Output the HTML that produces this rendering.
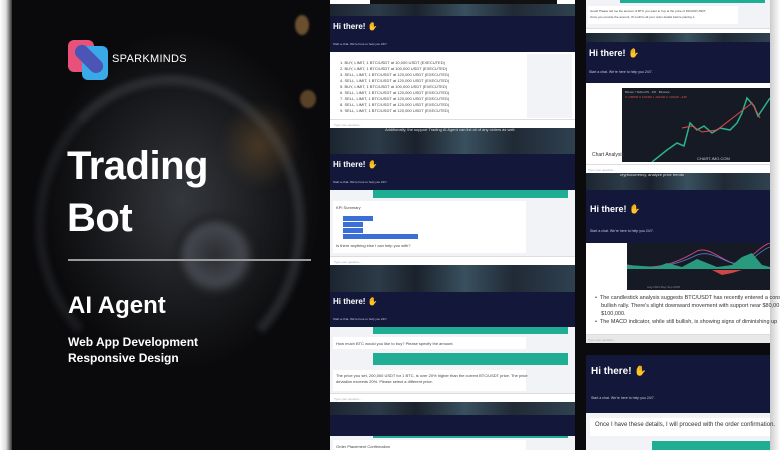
<!DOCTYPE html>
<html><head><meta charset="utf-8"><style>
*{margin:0;padding:0;box-sizing:border-box}
body{width:780px;height:450px;overflow:hidden;background:#0b0b0d;font-family:"Liberation Sans",sans-serif;position:relative}
.abs{position:absolute}
.navy{background:#13173a}
.strip{background:linear-gradient(90deg,#1b2530,#2c3b48 20%,#1a222c 35%,#39505e 55%,#202a35 75%,#2f4150);}
.hi{color:#fff;font-weight:bold;position:absolute}
.sub{color:#ccd;position:absolute}
.white{background:#fff}
.in{background:#fff;border-top:1px solid #ddd;color:#aaa;font-size:3px;position:absolute}
.t{position:absolute;font-size:4px;color:#444;line-height:6px}
</style></head><body>
<!-- left bg -->
<div class="abs" style="left:0;top:0;width:12px;height:450px;background:linear-gradient(90deg,#fff,#ddd 50%,#333)"></div>
<div class="abs" style="left:12px;top:0;width:318px;height:450px;background:radial-gradient(ellipse 140px 170px at 170px 200px,#34373c,#1a1b1e 60%,#0a0a0c 100%)"></div>
<div class="abs" style="left:35px;top:75px;width:270px;height:300px;border-radius:50%;border:10px solid rgba(110,115,125,.25);border-bottom-color:transparent;border-left-color:rgba(90,95,105,.2);filter:blur(3px)"></div>
<div class="abs" style="left:175px;top:215px;width:80px;height:80px;border-radius:50%;background:radial-gradient(#2a2c30,#44474e 50%,#1b1c1f 70%);filter:blur(3px)"></div>
<div class="abs" style="left:220px;top:100px;width:80px;height:90px;border-radius:50%;background:radial-gradient(rgba(130,95,50,.45),transparent 70%);filter:blur(4px)"></div>
<div class="abs" style="left:295px;top:15px;width:14px;height:20px;border-radius:50%;background:#6b5030;filter:blur(1px)"></div>
<div class="abs" style="left:300px;top:90px;width:16px;height:18px;border-radius:50%;background:#5a4228;filter:blur(1px)"></div>
<!-- logo -->
<svg class="abs" style="left:68px;top:38px" width="42" height="44" viewBox="0 0 42 44">
<rect x="0" y="2" width="26" height="32" rx="6" fill="#e8527a"/>
<rect x="14" y="8" width="26" height="34" rx="6" fill="#3aa9e8"/>
<rect x="4" y="14" width="34" height="14" rx="7" fill="#4a55b5" transform="rotate(45 21 21)"/>
</svg>
<div class="abs" style="left:112px;top:53px;color:#fff;font-size:11px;letter-spacing:.3px">SPARKMINDS</div>
<div class="abs" style="left:67px;top:140px;color:#fff;font-size:40px;font-weight:bold;line-height:52px;letter-spacing:-.5px">Trading<br>Bot</div>
<div class="abs" style="left:68px;top:259px;width:243px;height:2px;background:#9a9a9a"></div>
<div class="abs" style="left:68px;top:292px;color:#fff;font-size:24px;font-weight:bold">AI Agent</div>
<div class="abs" style="left:68px;top:334px;color:#fff;font-size:12px;font-weight:bold;line-height:16px">Web App Development<br>Responsive Design</div>

<!-- col2 -->
<div class="abs" style="left:330px;top:0;width:245px;height:450px;background:#111"></div>
<div class="abs white" style="left:330px;top:0;width:40px;height:4px"></div>
<div class="abs white" style="left:557px;top:0;width:18px;height:4px"></div>
<div class="abs strip" style="left:330px;top:4px;width:245px;height:12px"></div>
<div class="abs navy" style="left:330px;top:16px;width:245px;height:36px"></div>
<div class="hi" style="left:333px;top:22px;font-size:8px">Hi there! <span style="color:#f5b642">✋</span></div>
<div class="sub" style="left:333px;top:42px;font-size:3px">Start a chat. We're here to help you 24/7.</div>
<div class="abs white" style="left:330px;top:52px;width:245px;height:68px"></div>
<div class="abs" style="left:527px;top:54px;width:45px;height:64px;background:#f2f3f6"></div>
<div class="t" style="left:340px;top:60px">1. BUY, LIMIT, 1 BTC/USDT at 10,000 USDT (EXECUTED)<br>2. BUY, LIMIT, 1 BTC/USDT at 100,000 USDT (EXECUTED)<br>3. SELL, LIMIT, 1 BTC/USDT at 120,000 USDT (EXECUTED)<br>4. SELL, LIMIT, 1 BTC/USDT at 120,000 USDT (EXECUTED)<br>5. BUY, LIMIT, 1 BTC/USDT at 100,000 USDT (EXECUTED)<br>6. SELL, LIMIT, 1 BTC/USDT at 120,000 USDT (EXECUTED)<br>7. SELL, LIMIT, 1 BTC/USDT at 120,000 USDT (EXECUTED)<br>8. SELL, LIMIT, 1 BTC/USDT at 120,000 USDT (EXECUTED)<br>9. SELL, LIMIT, 1 BTC/USDT at 120,000 USDT (EXECUTED)</div>
<div class="in" style="left:330px;top:119px;width:245px;height:9px;padding:3px 4px">Type your question...</div>
<div class="abs strip" style="left:330px;top:128px;width:245px;height:26px"></div>
<div class="abs" style="left:385px;top:127px;color:#ddd;font-size:4px">Additionally, the support Trading AI Agent can list all of any orders as well.</div>
<div class="abs navy" style="left:330px;top:154px;width:245px;height:36px"></div>
<div class="hi" style="left:333px;top:160px;font-size:8px">Hi there! <span style="color:#f5b642">✋</span></div>
<div class="sub" style="left:333px;top:180px;font-size:3px">Start a chat. We're here to help you 24/7.</div>
<div class="abs white" style="left:330px;top:190px;width:245px;height:66px;background:#f2f3f6"></div>
<div class="abs" style="left:373px;top:190px;width:195px;height:8px;background:#1fae94"></div>
<div class="abs white" style="left:333px;top:201px;width:193px;height:52px"></div>
<div class="t" style="left:336px;top:205px">KPI Summary</div>
<div class="abs" style="left:343px;top:216px;width:30px;height:5px;background:#3b6fd8"></div>
<div class="abs" style="left:343px;top:222px;width:20px;height:5px;background:#3b6fd8"></div>
<div class="abs" style="left:343px;top:228px;width:20px;height:5px;background:#3b6fd8"></div>
<div class="abs" style="left:343px;top:234px;width:75px;height:5px;background:#3b6fd8"></div>
<div class="t" style="left:336px;top:243px">Is there anything else I can help you with?</div>
<div class="in" style="left:330px;top:256px;width:245px;height:9px;padding:3px 4px">Type your question...</div>
<div class="abs strip" style="left:330px;top:265px;width:245px;height:27px"></div>
<div class="abs navy" style="left:330px;top:292px;width:245px;height:35px"></div>
<div class="hi" style="left:333px;top:297px;font-size:8px">Hi there! <span style="color:#f5b642">✋</span></div>
<div class="sub" style="left:333px;top:317px;font-size:3px">Start a chat. We're here to help you 24/7.</div>
<div class="abs" style="left:330px;top:327px;width:245px;height:66px;background:#f2f3f6"></div>
<div class="abs" style="left:373px;top:327px;width:195px;height:7px;background:#1fae94"></div>
<div class="abs white" style="left:333px;top:337px;width:193px;height:12px"></div>
<div class="t" style="left:336px;top:341px">How much BTC would you like to buy? Please specify the amount.</div>
<div class="abs" style="left:373px;top:353px;width:195px;height:12px;background:#1fae94"></div>
<div class="abs white" style="left:333px;top:370px;width:193px;height:21px"></div>
<div class="t" style="left:336px;top:373px">The price you set, 200,000 USDT for 1 BTC, is over 20% higher than the current BTC/USDT price. The price<br>deviation exceeds 20%. Please select a different price.</div>
<div class="in" style="left:330px;top:393px;width:245px;height:9px;padding:3px 4px">Type your question...</div>
<div class="abs strip" style="left:330px;top:402px;width:245px;height:13px"></div>
<div class="abs navy" style="left:330px;top:415px;width:245px;height:21px"></div>
<div class="abs" style="left:330px;top:436px;width:245px;height:14px;background:#f2f3f6"></div>
<div class="abs" style="left:373px;top:436px;width:195px;height:2px;background:#1fae94"></div>
<div class="abs white" style="left:333px;top:440px;width:193px;height:10px"></div>
<div class="t" style="left:336px;top:444px">Order Placement Confirmation</div>

<!-- col3 -->
<div class="abs" style="left:575px;top:0;width:11px;height:450px;background:#0b0b0d"></div>
<div class="abs" style="left:770px;top:0;width:10px;height:450px;background:linear-gradient(90deg,#ccc,#fff)"></div>
<div class="abs white" style="left:586px;top:0;width:184px;height:28px;background:#f2f3f6"></div>
<div class="abs" style="left:620px;top:0;width:145px;height:3px;background:#1fae94"></div>
<div class="abs white" style="left:588px;top:6px;width:150px;height:18px"></div>
<div class="t" style="left:590px;top:8px;font-size:3px">Great! Please tell me the amount of BTC you want to buy at the price of 100,000 USDT.<br>Once you provide the amount, I'll confirm all your order details before placing it.</div>
<div class="in" style="left:586px;top:28px;width:184px;height:5px"></div>
<div class="abs strip" style="left:586px;top:33px;width:184px;height:9px"></div>
<div class="abs navy" style="left:586px;top:42px;width:184px;height:41px"></div>
<div class="hi" style="left:589px;top:48px;font-size:9px">Hi there! <span style="color:#f5b642">✋</span></div>
<div class="sub" style="left:589px;top:70px;font-size:3.5px">Start a chat. We're here to help you 24/7.</div>
<div class="abs white" style="left:586px;top:83px;width:184px;height:90px"></div>
<svg class="abs" style="left:622px;top:88px" width="148" height="74" viewBox="0 0 148 74">
<rect width="148" height="74" fill="#161a25"/>
<text x="3" y="5" font-size="3" fill="#bbb" font-family="Liberation Sans">Bitcoin / TetherUS · 1W · Binance</text>
<text x="3" y="10" font-size="3" fill="#e05050" font-family="Liberation Sans">O 105840 H 106400 L 102400 C 104220 −445</text>
<polyline points="30,74 45,62 55,55 62,58 68,35 75,42 82,38 90,45 98,40 108,42 115,35 120,25 125,10 132,18 136,28 140,22 148,10" fill="none" stroke="#2bb38a" stroke-width="1.5"/>
<polyline points="60,40 70,38 80,44 95,42 130,15 138,30" fill="none" stroke="#e04a4a" stroke-width="1"/>
<text x="75" y="72" font-size="4" fill="#ccc" font-family="Liberation Sans">CHART-IMG.COM</text>
</svg>
<div class="t" style="left:592px;top:152px;font-size:5px;color:#333">Chart Analysis</div>
<div class="in" style="left:586px;top:164px;width:184px;height:9px;padding:3px 2px">Type your question...</div>
<div class="abs strip" style="left:586px;top:173px;width:184px;height:17px"></div>
<div class="abs" style="left:620px;top:172px;color:#ddd;font-size:4px;white-space:nowrap">cryptocurrency, analyze price trends</div>
<div class="abs navy" style="left:586px;top:190px;width:184px;height:53px"></div>
<div class="hi" style="left:590px;top:204px;font-size:9px">Hi there! <span style="color:#f5b642">✋</span></div>
<div class="sub" style="left:590px;top:229px;font-size:3.5px">Start a chat. We're here to help you 24/7.</div>
<div class="abs white" style="left:586px;top:243px;width:184px;height:92px"></div>
<svg class="abs" style="left:627px;top:243px" width="143" height="47" viewBox="0 0 143 47">
<rect width="143" height="47" fill="#161a25"/>
<path d="M0,22 C30,28 50,20 70,8 C85,2 100,25 115,20 C125,14 135,2 143,0" fill="none" stroke="#d0457a" stroke-width="1"/>
<path d="M0,24 C30,26 50,22 70,12 C85,6 100,22 115,22 C125,18 135,6 143,4" fill="none" stroke="#4a7fd0" stroke-width=".8"/>
<path d="M0,22 L30,24 L40,20 L55,24 L70,16 L85,22 L90,24 L105,22 L115,14 L125,10 L135,22 L143,24 L143,26 L0,26Z" fill="#2a9a7e"/>
<path d="M85,27 L95,32 L105,30 L115,27Z" fill="#d04545"/>
<text x="20" y="45" font-size="3" fill="#888" font-family="Liberation Sans">Aug        2024        May        Sep        2025</text>
</svg>
<div class="t" style="left:595px;top:294px;font-size:5.5px;line-height:8px;color:#333;white-space:nowrap">•&nbsp; The candlestick analysis suggests BTC/USDT has recently entered a consoli<br>&nbsp;&nbsp;&nbsp; bullish rally. There's slight downward movement with support near $80,00<br>&nbsp;&nbsp;&nbsp; $100,000.<br>•&nbsp; The MACD indicator, while still bullish, is showing signs of diminishing up</div>
<div class="in" style="left:586px;top:334px;width:184px;height:9px;padding:3px 2px;background:#e8e8e8">Type your question...</div>
<div class="abs navy" style="left:586px;top:355px;width:184px;height:58px"></div>
<div class="hi" style="left:591px;top:366px;font-size:10px">Hi there! <span style="color:#f5b642">✋</span></div>
<div class="sub" style="left:591px;top:396px;font-size:3.5px">Start a chat. We're here to help you 24/7.</div>
<div class="abs" style="left:586px;top:413px;width:184px;height:37px;background:#f2f3f6"></div>
<div class="abs white" style="left:590px;top:418px;width:180px;height:18px"></div>
<div class="abs" style="left:595px;top:422px;font-size:6px;color:#333;white-space:nowrap">Once I have these details, I will proceed with the order confirmation.</div>
<div class="abs" style="left:652px;top:441px;width:118px;height:9px;background:#1fae94"></div>
</body></html>
